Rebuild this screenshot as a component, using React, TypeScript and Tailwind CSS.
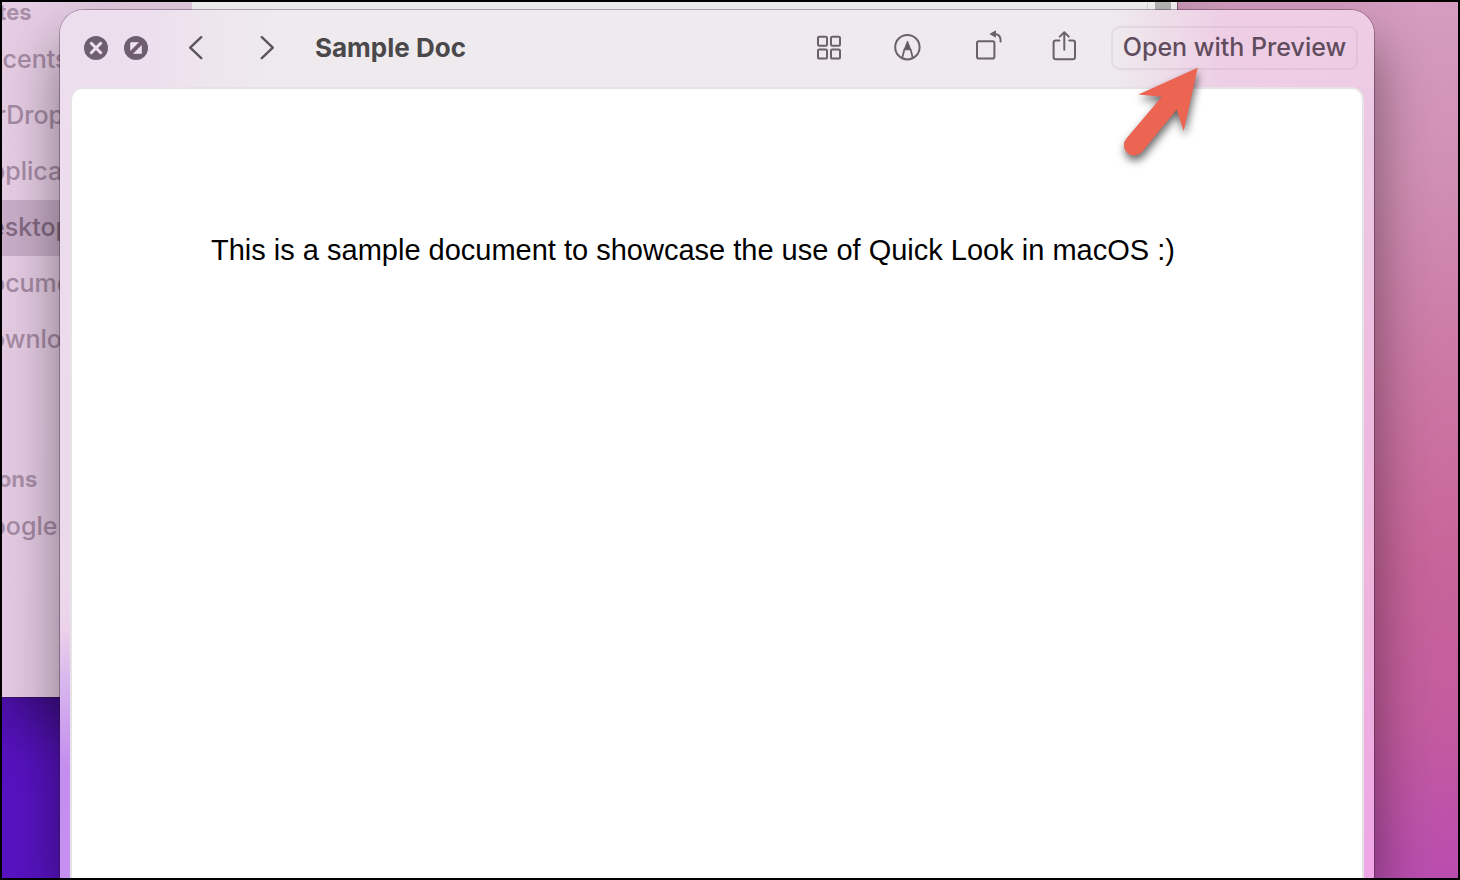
import type { ReactNode } from 'react';

type SidebarItem = {
  label: string;
  active?: boolean;
};

type SidebarSection = {
  title: string;
  items: SidebarItem[];
};

const sections: SidebarSection[] = [
  {
    title: 'Favorites',
    items: [
      { label: 'Recents' },
      { label: 'AirDrop' },
      { label: 'Applications' },
      { label: 'Desktop', active: true },
      { label: 'Documents' },
      { label: 'Downloads' },
    ],
  },
  {
    title: 'Locations',
    items: [{ label: 'Google Drive' }],
  },
];

const FinderWindow = () => (
  <section
    aria-label="Finder"
    className="absolute left-0 right-[281px] top-0 flex h-[695px] overflow-hidden bg-[#f6f6f6] shadow-[0_24px_60px_rgba(0,0,0,0.4),0_0_0_1px_rgba(60,30,60,0.5)]"
  >
    <nav className="w-[190px] shrink-0 overflow-hidden bg-linear-to-b from-[#e5cde3] to-[#e4cae3]">
      <div className="-ml-[70px] flex flex-col gap-[101px]">
        {sections.map((section) => (
          <div key={section.title}>
            <h2 className="mb-[10px] text-[22px] font-bold leading-5 text-[#aa8fa9]">{section.title}</h2>
            <ul>
              {section.items.map((item) => (
                <li key={item.label}>
                  <a
                    href="#"
                    className={`flex h-14 items-center pl-10 text-[25px] font-medium ${
                      item.active ? 'bg-[#c8aec8] text-[#836a82]' : 'text-[#a58aa4]'
                    }`}
                  >
                    {item.label}
                  </a>
                </li>
              ))}
            </ul>
          </div>
        ))}
      </div>
    </nav>
    <div className="flex-1" />
    <div className="w-[30px] border-l border-[#dcdcdc] bg-[#f8f8f8] pl-[7px]">
      <div className="h-60 w-4 rounded-b-full bg-[#b8b8b8]" />
    </div>
  </section>
);

const ToolButton = ({ label, children }: { label: string; children: ReactNode }) => (
  <button type="button" aria-label={label} className="h-10 w-10">
    <svg
      viewBox="0 0 40 40"
      className="h-10 w-10"
      fill="none"
      stroke="#6a6269"
      strokeWidth="2"
      strokeLinecap="round"
      strokeLinejoin="round"
    >
      {children}
    </svg>
  </button>
);

const Arrow = () => (
  <svg
    viewBox="0 0 100 110"
    className="pointer-events-none absolute left-0 top-8 z-10 h-[110px] w-[100px] overflow-visible drop-shadow-[1px_5px_4px_rgba(0,0,0,0.6)]"
    aria-hidden="true"
  >
    <path
      d="M86.7 9.8 L27.3 36.5 L50.7 38.8 L15.4 80.5 A10.2 10.2 0 0 0 31 94 L65.7 51.5 L72.7 73.2 Z"
      fill="#ec6452"
    />
  </svg>
);

const Toolbar = () => (
  <header className="flex h-[77px] items-center bg-[linear-gradient(90deg,#eddeee_0,#eddfee_90px,#eee8ed_170px,#eeeaed_220px,#eeeaed_calc(100%_-_260px),#eecee5_calc(100%_-_150px),#eecce4_100%)] pb-0.5 pl-6 pr-4">
    <div className="flex gap-4">
      <button type="button" aria-label="Close" className="h-6 w-6">
        <svg viewBox="0 0 24 24" className="h-6 w-6">
          <circle cx="12" cy="12" r="12" fill="#6f5d70" />
          <path d="M7.3 7.3 L16.7 16.7 M16.7 7.3 L7.3 16.7" stroke="#eee0f0" strokeWidth="3" strokeLinecap="round" />
        </svg>
      </button>
      <button type="button" aria-label="Full screen" className="h-6 w-6">
        <svg viewBox="0 0 24 24" className="h-6 w-6">
          <circle cx="12" cy="12" r="12" fill="#6f5d70" />
          <path
            d="M7 6.5 H14.4 L6.5 14.4 V7 Z M17.5 9.6 V17.5 H9.6 Z"
            fill="#eee0f0"
            stroke="#eee0f0"
            strokeWidth="0.6"
            strokeLinejoin="round"
          />
        </svg>
      </button>
    </div>

    <div className="ml-9 flex gap-[47px]">
      <button type="button" aria-label="Previous" className="h-6 w-6">
        <svg viewBox="0 0 24 24" className="h-6 w-6" fill="none" stroke="#5d555c" strokeWidth="2.4" strokeLinecap="round" strokeLinejoin="round">
          <path d="M17.2 1.2 L6.2 11.7 L17.2 22.2" />
        </svg>
      </button>
      <button type="button" aria-label="Next" className="h-6 w-6">
        <svg viewBox="0 0 24 24" className="h-6 w-6" fill="none" stroke="#5d555c" strokeWidth="2.4" strokeLinecap="round" strokeLinejoin="round">
          <path d="M6.8 1.2 L17.8 11.7 L6.8 22.2" />
        </svg>
      </button>
    </div>

    <h1 className="ml-9 whitespace-nowrap text-[26px] font-bold text-[#4a484a]">Sample Doc</h1>

    <div className="ml-auto flex items-center gap-7">
      <div className="flex gap-[38px]">
        <ToolButton label="Index sheet">
          <rect x="9" y="8.8" width="9" height="9" rx="1.2" />
          <rect x="22" y="8.8" width="9" height="9" rx="1.2" />
          <rect x="9" y="21.6" width="9" height="9" rx="1.2" />
          <rect x="22" y="21.6" width="9" height="9" rx="1.2" />
        </ToolButton>
        <ToolButton label="Markup">
          <circle cx="20.4" cy="19.2" r="12.2" />
          <path d="M15.2 30 L17.4 21.4 H23.6 L25.8 30" strokeWidth="1.8" />
          <path d="M20.5 13.4 L23.6 21.4 H17.4 Z" fill="#5d555c" strokeWidth="1.2" />
        </ToolButton>
        <ToolButton label="Rotate">
          <rect x="12" y="13.3" width="17.4" height="17.2" rx="1.8" />
          <path d="M30 6 C33.8 6.2 35.8 9 35.6 13.6" strokeWidth="2" />
          <path d="M25.4 6 L30.4 3.2 V8.8 Z" fill="#6a6269" strokeWidth="1.2" />
        </ToolButton>
        <ToolButton label="Share">
          <path d="M16.4 12.6 H12.8 Q10.6 12.6 10.6 14.8 V29 Q10.6 31.2 12.8 31.2 H29.8 Q32 31.2 32 29 V14.8 Q32 12.6 29.8 12.6 H26.2" />
          <path d="M21.3 21.8 V4.4 M16.8 8.6 L21.3 4.2 L25.8 8.6" />
        </ToolButton>
      </div>
      <div className="relative">
        <button
          type="button"
          className="h-11 w-[247px] whitespace-nowrap rounded-[9px] border-2 border-[#806080]/10 text-[25px] font-medium text-[#604c5d]"
        >
          Open with Preview
        </button>
        <Arrow />
      </div>
    </div>
  </header>
);

const QuickLookWindow = () => (
  <section
    aria-label="Quick Look"
    className="absolute bottom-0 left-[58px] right-[84px] top-2 flex flex-col rounded-t-3xl shadow-[0_30px_56px_rgba(0,0,0,0.45),0_0_0_1px_rgba(60,30,60,0.35)]"
  >
    <div className="flex flex-1 flex-col overflow-hidden rounded-t-3xl bg-[linear-gradient(180deg,#eddeee_0,#ecd9ec_65%,#ecd3ea_71%,#d9b8ee_77%,#c48eee_87%,#c590ef_100%),linear-gradient(180deg,#eecce4_0,#ecc6e2_20%,#eebadf_45%,#eeb3dc_70%,#efa6e7_100%)] bg-size-[50%_100%] bg-position-[left_top,right_top] bg-no-repeat">
      <Toolbar />
      <main className="mx-[10px] flex-1 rounded-t-[12px] border-2 border-b-0 border-[#e6e3e6] bg-white px-[139px] pt-[141px]">
        <p className="whitespace-nowrap font-['Liberation_Sans',Arial,sans-serif] text-[29px] leading-10 text-black">
          This is a sample document to showcase the use of Quick Look in macOS :)
        </p>
      </main>
    </div>
  </section>
);

const App = () => (
  <div className="relative h-screen overflow-hidden border-2 border-black bg-[linear-gradient(90deg,#5813c2_50%,transparent_50%),linear-gradient(172deg,#d3a6c4_0,#d6a0c2_15%,#d08fb3_35%,#cc78a4_53%,#c8659a_70%,#c35c9e_85%,#b94db0_100%)] font-[Inter,sans-serif]">
    <FinderWindow />
    <QuickLookWindow />
  </div>
);

export default App;
